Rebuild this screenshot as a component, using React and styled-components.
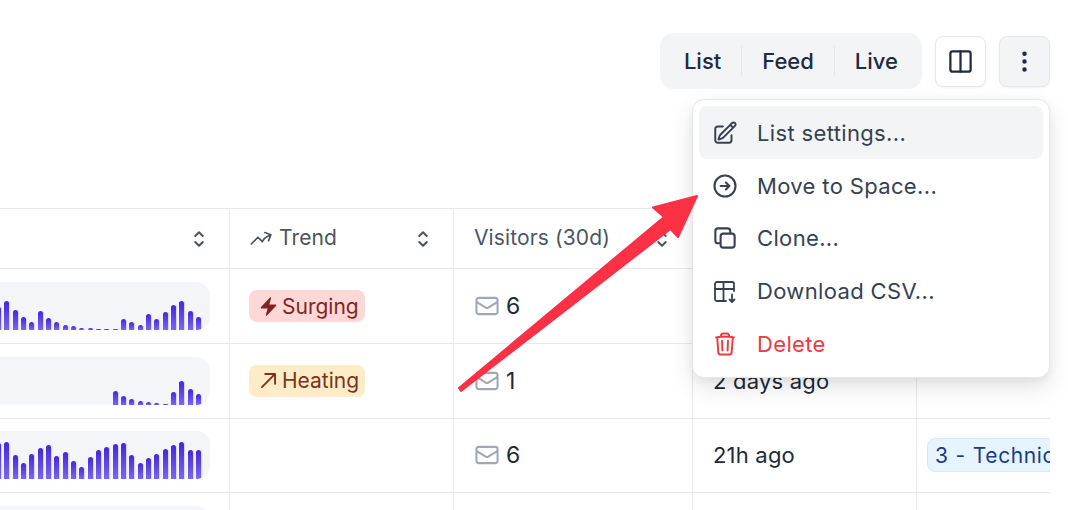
import React from 'react';
import styled, { createGlobalStyle } from 'styled-components';
import { Columns2, EllipsisVertical } from 'lucide-react';
import {
  HiOutlinePencilSquare,
  HiOutlineArrowRightCircle,
  HiOutlineSquare2Stack,
  HiOutlineTrash,
  HiOutlineEnvelope,
  HiOutlineArrowTrendingUp,
  HiOutlineArrowUpRight,
  HiOutlineChevronUpDown,
  HiBolt,
} from 'react-icons/hi2';

const rows = [
  {
    bars: [23, 29, 20, 13, 8, 19, 12, 8, 5, 4, 2, 2, 1, 1, 1, 11, 8, 5, 16, 11, 18, 25, 29, 19, 13],
    trend: 'surging',
    visitors: 6,
    seen: '',
  },
  {
    bars: [0, 0, 0, 0, 0, 0, 0, 0, 0, 0, 0, 0, 0, 0, 14, 9, 6, 4, 3, 2, 1, 13, 24, 16, 11],
    trend: 'heating',
    visitors: 1,
    seen: '2 days ago',
  },
  {
    bars: [36, 37, 24, 16, 25, 31, 34, 23, 27, 18, 12, 22, 29, 32, 35, 36, 24, 16, 21, 25, 30, 34, 37, 29, 29],
    visitors: 6,
    seen: '21h ago',
    stage: '3 - Technical fit',
  },
  {
    bars: [],
    visitors: null,
    seen: '',
  },
];

const App = () => (
  <>
    <GlobalStyle />
    <Page>
      <Toolbar>
        <Tabs>
          <Tab>List</Tab>
          <Tab>Feed</Tab>
          <Tab>Live</Tab>
        </Tabs>
        <IconButton>
          <Columns2 size={27} strokeWidth={2} />
        </IconButton>
        <IconButton $active>
          <EllipsisVertical size={27} strokeWidth={2} />
        </IconButton>
      </Toolbar>

      <Table>
        <HeaderRow>
          <HeaderCell>
            <HeaderLabel />
            <SortIcon />
          </HeaderCell>
          <HeaderCell>
            <HeaderLabel>
              <HiOutlineArrowTrendingUp size={24} />
              Trend
            </HeaderLabel>
            <SortIcon />
          </HeaderCell>
          <HeaderCell>
            <HeaderLabel>Visitors (30d)</HeaderLabel>
            <SortIcon />
          </HeaderCell>
          <HeaderCell />
          <HeaderCell />
        </HeaderRow>
        {rows.map((row, i) => (
          <Row key={i}>
            <ChartCell>
              <Chart>
                {row.bars.map((h, j) => (
                  <Bar key={j} style={{ height: h }} />
                ))}
              </Chart>
            </ChartCell>
            <Cell>
              {row.trend === 'surging' && (
                <TrendBadge $bg="#fed7d7" $color="#7f2624">
                  <HiBolt size={21} />
                  Surging
                </TrendBadge>
              )}
              {row.trend === 'heating' && (
                <TrendBadge $bg="#feebc8" $color="#7b341e">
                  <HiOutlineArrowUpRight size={21} style={{ strokeWidth: 2.2 }} />
                  Heating
                </TrendBadge>
              )}
            </Cell>
            <Cell>
              {row.visitors !== null && (
                <Visitors>
                  <HiOutlineEnvelope size={26} />
                  {row.visitors}
                </Visitors>
              )}
            </Cell>
            <Cell>{row.seen}</Cell>
            <StageCell>{row.stage && <StageBadge>{row.stage}</StageBadge>}</StageCell>
          </Row>
        ))}
      </Table>

      <Menu>
        <MenuItem $active>
          <IconSlot>
            <HiOutlinePencilSquare size={26} />
          </IconSlot>
          List settings...
        </MenuItem>
        <MenuItem>
          <IconSlot>
            <HiOutlineArrowRightCircle size={28} />
          </IconSlot>
          Move to Space...
        </MenuItem>
        <MenuItem>
          <IconSlot>
            <HiOutlineSquare2Stack size={28} />
          </IconSlot>
          Clone...
        </MenuItem>
        <MenuItem>
          <IconSlot>
            <svg width="28" height="28" viewBox="0 0 28 28" fill="none" stroke="currentColor" strokeWidth="2.1" strokeLinecap="round" strokeLinejoin="round">
              <path d="M15 24H6a2 2 0 0 1-2-2V7a2 2 0 0 1 2-2h15a2 2 0 0 1 2 2v7" />
              <path d="M4 12h19M12.5 5v19" />
              <path d="M21 17.5V25M18.5 22.5L21 25l2.5-2.5" />
            </svg>
          </IconSlot>
          Download CSV...
        </MenuItem>
        <MenuItem $danger>
          <IconSlot>
            <HiOutlineTrash size={26} />
          </IconSlot>
          Delete
        </MenuItem>
      </Menu>

      <Arrow viewBox="0 0 1068 510">
        <path
          d="M459 388 L664 217 L653 207.5 L697 196 L678 237 L670.5 229 L461 391 Z"
          fill="#fc3146"
          stroke="#fc3146"
          strokeWidth="2"
          strokeLinejoin="round"
        />
      </Arrow>
    </Page>
  </>
);

export default App;

const GlobalStyle = createGlobalStyle`
  html, body {
    margin: 0;
    background: #fff;
  }
  body {
    font-family: Inter, "Liberation Sans", sans-serif;
    color: #1f2937;
  }
`;
const Page = styled.div`
  position: relative;
  width: 1068px;
  height: 510px;
  overflow: hidden;
`;
const Toolbar = styled.div`
  display: flex;
  justify-content: flex-end;
  align-items: center;
  gap: 13px;
  width: 1050px;
  height: 56px;
  margin-top: 33px;
  margin-bottom: 119px;
`;
const Tabs = styled.div`
  display: flex;
  align-items: center;
  height: 56px;
  padding: 0 4px;
  background: #f3f4f6;
  border-radius: 14px;
`;
const Tab = styled.div`
  display: flex;
  align-items: center;
  height: 30px;
  padding: 0 20px;
  font-size: 22px;
  font-weight: 450;
  color: #1f2a44;
  border-left: 1px solid #e5e7eb;
  &:first-child {
    border-left: none;
  }
`;
const IconButton = styled.div`
  display: flex;
  align-items: center;
  justify-content: center;
  box-sizing: border-box;
  width: 51px;
  height: 51px;
  color: #1f2a44;
  background: ${(p) => (p.$active ? '#f3f4f6' : '#fff')};
  border: 1px solid #e5e7eb;
  border-radius: 8px;
  box-shadow: 0 1px 2px rgba(0, 0, 0, 0.05);
`;
const Table = styled.div`
  width: 1050px;
  border-top: 1px solid #e8e9ee;
`;
const HeaderRow = styled.div`
  display: grid;
  grid-template-columns: 230px 224px 239px 224px 133px;
  height: 59.33px;
  border-bottom: 1px solid #e8e9ee;
  font-size: 21px;
  letter-spacing: 0.12px;
  color: #4b5563;
`;
const Row = styled.div`
  display: grid;
  grid-template-columns: 230px 224px 239px 224px 133px;
  height: 73.67px;
  border-bottom: 1px solid #e8e9ee;
  font-size: 22px;
  letter-spacing: 0.2px;
`;
const Cell = styled.div`
  display: flex;
  align-items: center;
  justify-content: space-between;
  box-sizing: border-box;
  padding: 0 20px;
  border-right: 1px solid #e8e9ee;
  white-space: nowrap;
  &:last-child {
    border-right: none;
  }
`;
const HeaderCell = styled(Cell)`
  padding: 0 18px 0 20px;
`;
const HeaderLabel = styled.span`
  display: flex;
  align-items: center;
  gap: 6px;
  margin-bottom: 2px;
  svg {
    margin-left: -1px;
    stroke-width: 1.7;
  }
`;
const SortIcon = styled(HiOutlineChevronUpDown).attrs({ size: 24 })`
  flex: none;
  stroke-width: 2;
`;
const ChartCell = styled.div`
  display: flex;
  align-items: center;
  justify-content: flex-end;
  box-sizing: border-box;
  padding-right: 19px;
  overflow: hidden;
  border-right: 1px solid #e8e9ee;
`;
const Chart = styled.div`
  display: flex;
  flex: none;
  justify-content: flex-end;
  align-items: flex-end;
  gap: 3.33px;
  width: 240px;
  height: 48px;
  padding-right: 9px;
  box-sizing: border-box;
  overflow: hidden;
  background: #f4f5f8;
  border-radius: 14px;
`;
const Bar = styled.div`
  flex: none;
  width: 5px;
  border-radius: 3px 3px 0 0;
  background: linear-gradient(#4526d8, #7a66f5);
  box-shadow: 1px 0 1px rgba(124, 104, 246, 0.25);
`;
const TrendBadge = styled.span`
  display: inline-flex;
  align-items: center;
  gap: 3px;
  height: 32px;
  margin-left: -1px;
  padding: 0 6px 0 9px;
  font-size: 21px;
  letter-spacing: 0;
  color: ${(p) => p.$color};
  background: ${(p) => p.$bg};
  border-radius: 8px;
`;
const Visitors = styled.span`
  display: flex;
  align-items: center;
  gap: 6px;
  font-size: 23px;
  svg {
    color: #a0a8b8;
    stroke-width: 1.9;
  }
`;
const StageCell = styled(Cell)`
  padding: 0 0 0 10px;
  overflow: hidden;
`;
const StageBadge = styled.span`
  display: inline-flex;
  align-items: center;
  height: 32px;
  padding: 0 7px;
  font-size: 21px;
  letter-spacing: 0.6px;
  word-spacing: 0.5px;
  color: #1e3a8a;
  background: #e6f5fd;
  border: 1px solid #d4ecfa;
  border-radius: 8px;
`;
const Menu = styled.div`
  position: absolute;
  top: 99px;
  left: 692px;
  box-sizing: border-box;
  width: 358px;
  height: 279px;
  padding: 6px;
  background: #fff;
  border: 1px solid #e5e7eb;
  border-radius: 12px;
  box-shadow: 0 10px 25px rgba(0, 0, 0, 0.1), 0 4px 10px rgba(0, 0, 0, 0.05);
`;
const MenuItem = styled.div`
  display: flex;
  align-items: center;
  gap: 18px;
  box-sizing: border-box;
  height: 52.75px;
  padding: 1px 16px 0 12px;
  font-size: 22px;
  letter-spacing: 0.35px;
  color: ${(p) => (p.$danger ? '#ef3a3f' : '#374151')};
  background: ${(p) => (p.$active ? '#f3f4f6' : 'transparent')};
  border-radius: 8px;
`;
const IconSlot = styled.span`
  display: flex;
  flex: none;
  align-items: center;
  justify-content: center;
  width: 28px;
  svg {
    stroke-width: 1.8;
  }
`;
const Arrow = styled.svg`
  position: absolute;
  top: 0;
  left: 0;
  width: 1068px;
  height: 510px;
  pointer-events: none;
`;
